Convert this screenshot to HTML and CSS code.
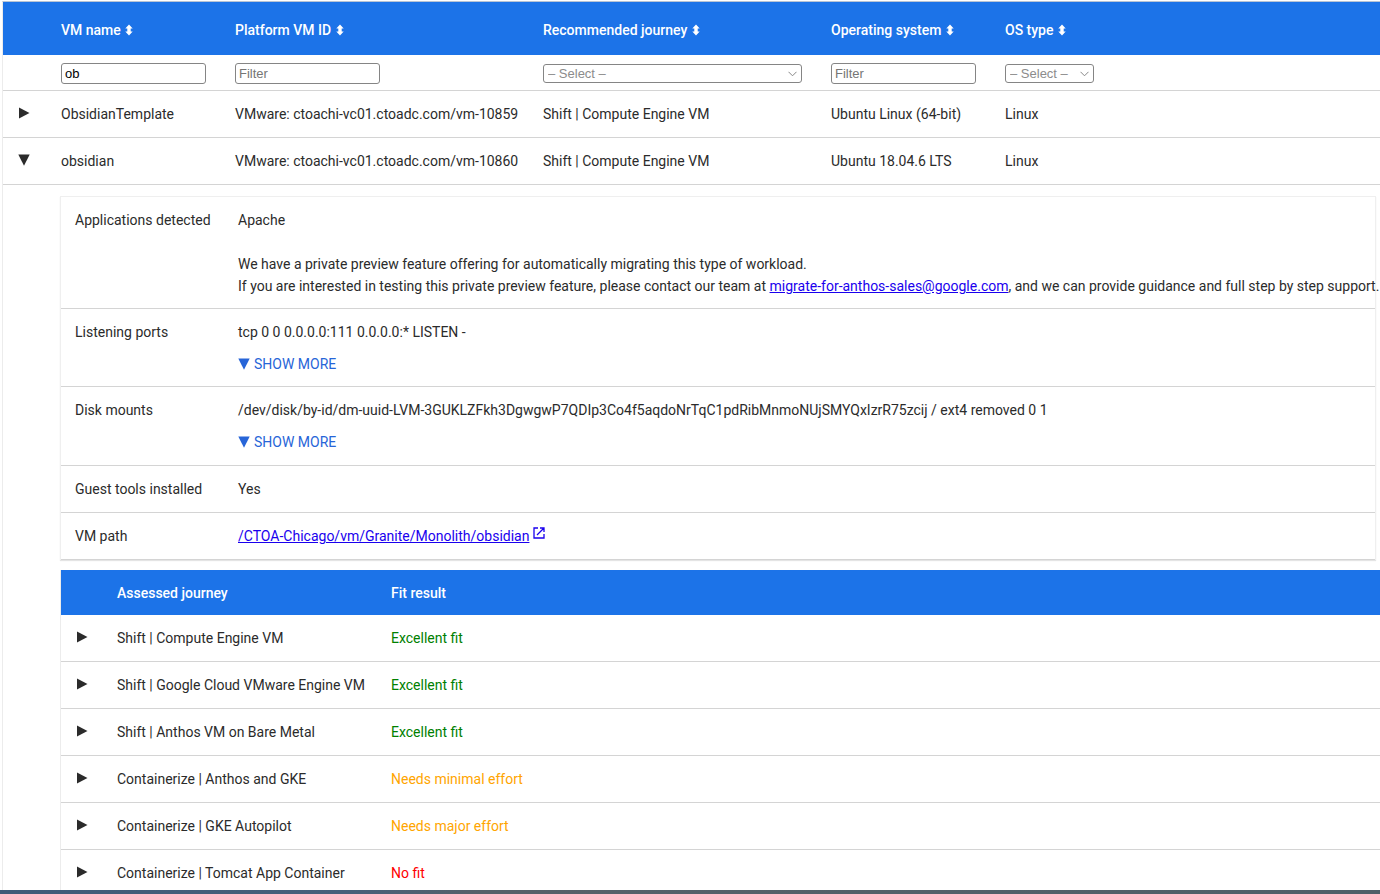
FILE: index.html
```html
<!DOCTYPE html>
<html lang="en">
<head>
<meta charset="utf-8">
<title>VM assessment report</title>
<link rel="stylesheet" href="styles.css">
</head>
<body>
<svg class="defs" aria-hidden="true">
  <symbol id="sort" viewBox="0 0 8 12"><path d="M4 0.5 7.7 4.4H5.7V7.6H7.7L4 11.5 0.3 7.6H2.3V4.4H0.3Z"/></symbol>
  <symbol id="right" viewBox="0 0 12 12"><path d="M1 0.5 11.5 6 1 11.5Z"/></symbol>
  <symbol id="down" viewBox="0 0 12 12"><path d="M0.3 0.5H11.7L6 11.7Z"/></symbol>
</svg>
<main class="report">
  <table class="grid vms">
    <colgroup><col class="c-toggle"><col class="c-name"><col class="c-id"><col class="c-journey"><col class="c-os"><col></colgroup>
    <thead>
      <tr class="head">
        <th></th>
        <th>VM name <svg class="sort"><use href="#sort"/></svg></th>
        <th>Platform VM ID <svg class="sort"><use href="#sort"/></svg></th>
        <th>Recommended journey <svg class="sort"><use href="#sort"/></svg></th>
        <th>Operating system <svg class="sort"><use href="#sort"/></svg></th>
        <th>OS type <svg class="sort"><use href="#sort"/></svg></th>
      </tr>
      <tr class="filters">
        <td></td>
        <td><input class="field" type="text" value="ob" aria-label="VM name"></td>
        <td><input class="field" type="text" placeholder="Filter" aria-label="Platform VM ID"></td>
        <td><select class="field pick wide" aria-label="Recommended journey"><option>– Select –</option></select></td>
        <td><input class="field" type="text" placeholder="Filter" aria-label="Operating system"></td>
        <td><select class="field pick" aria-label="OS type"><option>– Select –</option></select></td>
      </tr>
    </thead>
    <tbody>
      <tr>
        <td><button class="toggle" aria-label="Expand"><svg class="tri"><use href="#right"/></svg></button></td>
        <td>ObsidianTemplate</td><td>VMware: ctoachi-vc01.ctoadc.com/vm-10859</td><td>Shift | Compute Engine VM</td><td>Ubuntu Linux (64-bit)</td><td>Linux</td>
      </tr>
      <tr>
        <td><button class="toggle" aria-label="Collapse"><svg class="tri"><use href="#down"/></svg></button></td>
        <td>obsidian</td><td>VMware: ctoachi-vc01.ctoadc.com/vm-10860</td><td>Shift | Compute Engine VM</td><td>Ubuntu 18.04.6 LTS</td><td>Linux</td>
      </tr>
      <tr>
        <td></td>
        <td class="detail" colspan="5">
          <table class="grid facts">
            <colgroup><col class="c-fact"><col></colgroup>
            <tbody>
              <tr class="tall"><th>Applications detected</th><td>Apache<p class="note">We have a private preview feature offering for automatically migrating this type of workload.<br>If you are interested in testing this private preview feature, please contact our team at <a href="mailto:migrate-for-anthos-sales@google.com">migrate-for-anthos-sales@google.com</a>, and we can provide guidance and full step by step support.</p></td></tr>
              <tr class="tall"><th>Listening ports</th><td>tcp 0 0 0.0.0.0:111 0.0.0.0:* LISTEN -<button class="more"><svg class="tri"><use href="#down"/></svg>SHOW MORE</button></td></tr>
              <tr><th>Disk mounts</th><td>/dev/disk/by-id/dm-uuid-LVM-3GUKLZFkh3DgwgwP7QDIp3Co4f5aqdoNrTqC1pdRibMnmoNUjSMYQxIzrR75zcij / ext4 removed 0 1<button class="more"><svg class="tri"><use href="#down"/></svg>SHOW MORE</button></td></tr>
              <tr><th>Guest tools installed</th><td>Yes</td></tr>
              <tr><th>VM path</th><td><a href="#">/CTOA-Chicago/vm/Granite/Monolith/obsidian</a> <svg class="open" viewBox="0 0 12 12"><path d="M5 1H1V11H11V7M7 1H11V5M11 1 4 8"/></svg></td></tr>
            </tbody>
          </table>
          <table class="grid fits">
            <colgroup><col class="c-expand"><col class="c-assessed"><col></colgroup>
            <thead><tr class="head"><th></th><th>Assessed journey</th><th>Fit result</th></tr></thead>
            <tbody>
              <tr><td><button class="toggle" aria-label="Expand"><svg class="tri"><use href="#right"/></svg></button></td><td>Shift | Compute Engine VM</td><td class="good">Excellent fit</td></tr>
              <tr><td><button class="toggle" aria-label="Expand"><svg class="tri"><use href="#right"/></svg></button></td><td>Shift | Google Cloud VMware Engine VM</td><td class="good">Excellent fit</td></tr>
              <tr><td><button class="toggle" aria-label="Expand"><svg class="tri"><use href="#right"/></svg></button></td><td>Shift | Anthos VM on Bare Metal</td><td class="good">Excellent fit</td></tr>
              <tr><td><button class="toggle" aria-label="Expand"><svg class="tri"><use href="#right"/></svg></button></td><td>Containerize | Anthos and GKE</td><td class="effort">Needs minimal effort</td></tr>
              <tr><td><button class="toggle" aria-label="Expand"><svg class="tri"><use href="#right"/></svg></button></td><td>Containerize | GKE Autopilot</td><td class="effort">Needs major effort</td></tr>
              <tr><td><button class="toggle" aria-label="Expand"><svg class="tri"><use href="#right"/></svg></button></td><td>Containerize | Tomcat App Container</td><td class="bad">No fit</td></tr>
            </tbody>
          </table>
        </td>
      </tr>
    </tbody>
  </table>
</main>
<footer class="strip"></footer>
</body>
</html>
```
FILE: styles.css
```css
* { box-sizing: border-box; }
body {
  margin: 0;
  height: 100vh;
  display: flex;
  flex-direction: column;
  overflow: hidden;
  background: #fff;
  color: #2b2b2b;
  font: 14px/22px Roboto, "Liberation Sans", sans-serif;
}
.defs { display: none; }
.report { flex: 1; min-height: 0; overflow: hidden; padding: 1px 0 0 2px; }
.strip { flex: none; height: 4px; background: linear-gradient(90deg, #3f5b78, #46607a 25%, #566169 35%, #4f5f68); }

.grid { width: 100%; table-layout: fixed; border-collapse: separate; border-spacing: 0; }
.grid th, .grid td {
  padding: 12px 0 12px 15px;
  border-bottom: 1px solid #d4d4d4;
  text-align: left;
  vertical-align: top;
  font-weight: 400;
  white-space: nowrap;
}
.grid .head th { background: #1c73e8; color: #fff; font-weight: 500; border-bottom-color: #1c73e8; }

.vms { border-left: 1px solid #ececec; border-top: 1px solid #b8c4d4; }
.vms > thead > .head th { padding-top: 17px; padding-bottom: 13px; }
.c-toggle { width: 43px; }
.c-name { width: 174px; }
.c-id { width: 308px; }
.c-journey { width: 288px; }
.c-os { width: 174px; }
.grid .filters td { padding-top: 8px; padding-bottom: 6px; vertical-align: middle; line-height: 0; }

.field {
  width: 145px;
  height: 21px;
  padding: 0 3px;
  border: 1px solid #858585;
  border-radius: 3px;
  background: #fff;
  color: #000;
  font: 13px "Liberation Sans", Arial, sans-serif;
}
.field::placeholder { color: #757575; }
.pick {
  appearance: none;
  width: 89px;
  height: 19px;
  padding: 0 4px;
  color: #8c8c8c;
  background: no-repeat right 4px center / 9px 6px url("data:image/svg+xml,%3Csvg xmlns='http://www.w3.org/2000/svg' viewBox='0 0 9 6'%3E%3Cpath d='M.5 .8 4.5 4.8 8.5 .8' fill='none' stroke='%23888'/%3E%3C/svg%3E");
}
.wide { width: 259px; }

.sort { width: 8px; height: 12px; margin-left: 1px; fill: currentColor; vertical-align: -1px; }
.tri { display: block; width: 12px; height: 12px; fill: currentColor; }
.toggle, .more { padding: 0; border: 0; background: none; font: inherit; color: inherit; cursor: pointer; }
.toggle { display: block; margin-top: 4px; }

.grid .detail { padding: 11px 0 0 14px; border-bottom: 0; }
.facts { width: calc(100% - 4px); border: 1px solid #efefef; border-bottom: 0; box-shadow: 0 1px 1px #e4e4e4; }
.grid.facts tr > * { padding-left: 14px; }
.grid .tall > * { padding-bottom: 11px; }
.c-fact { width: 163px; }
.note { margin: 22px 0 0; }
a { color: #1a00ee; }
.more { display: flex; align-items: center; gap: 4px; margin-top: 10px; color: #2765d8; }
.open { width: 12px; height: 12px; fill: none; stroke: #1a00ee; stroke-width: 1.3; vertical-align: 2px; }

.fits { margin-top: 10px; border-left: 1px solid #ececec; }
.grid.fits .head th { padding-top: 12px; padding-bottom: 10px; }
.c-expand { width: 41px; }
.c-assessed { width: 274px; }
.good { color: #008000; }
.effort { color: #ffa500; }
.bad { color: #f00; }
```
